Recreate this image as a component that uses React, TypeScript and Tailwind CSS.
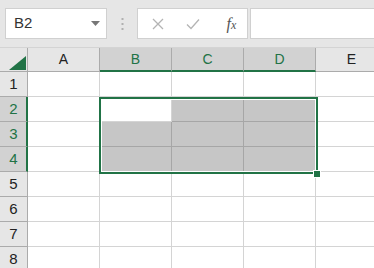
import React from "react";

const cols = ["A", "B", "C", "D", "E"];
const rows = [1, 2, 3, 4, 5, 6, 7, 8];
const selCols = ["B", "C", "D"];
const selRows = [2, 3, 4];

export default function App() {
  return (
    <div
      className="w-[374px] h-[268px] overflow-hidden bg-white relative"
      style={{ fontFamily: '"Liberation Sans", Arial, sans-serif' }}
    >
      {/* Formula bar */}
      <div className="h-[48px] bg-[#e6e6e6] flex items-start pt-[8px] pl-[5px] border-b border-[#d4d4d4]">
        <div className="w-[102px] h-[31px] bg-white border border-[#d0d0d0] flex items-center justify-between pl-[8px] pr-[6px]">
          <span className="text-[15px] text-[#333]">B2</span>
          <svg width="9" height="5" viewBox="0 0 9 5">
            <path d="M0 0 L9 0 L4.5 5 Z" fill="#777" />
          </svg>
        </div>
        <div className="w-[30px] h-[31px] flex items-center justify-center">
          <svg width="3" height="12" viewBox="0 0 3 12">
            <rect x="0.5" y="0" width="2" height="2" fill="#b0b0b0" />
            <rect x="0.5" y="5" width="2" height="2" fill="#b0b0b0" />
            <rect x="0.5" y="10" width="2" height="2" fill="#b0b0b0" />
          </svg>
        </div>
        <div className="w-[111px] h-[31px] bg-white border border-[#d0d0d0] flex items-center">
          <div className="w-[36px] flex justify-center pl-[4px]">
            <svg width="12" height="12" viewBox="0 0 12 12">
              <path d="M1 1 L11 11 M11 1 L1 11" stroke="#b4b4b4" strokeWidth="1.3" />
            </svg>
          </div>
          <div className="w-[36px] flex justify-center pl-[2px]">
            <svg width="14" height="12" viewBox="0 0 14 12">
              <path d="M1 6.5 L5 10.5 L13 1.5" stroke="#b4b4b4" strokeWidth="1.3" fill="none" />
            </svg>
          </div>
          <div className="flex-1 flex justify-center pl-[6px]">
            <span
              className="text-[16px] italic text-[#555] leading-none"
              style={{ fontFamily: '"Liberation Serif", "Times New Roman", serif' }}
            >
              <span>f</span>
              <span className="text-[12px]">x</span>
            </span>
          </div>
        </div>
        <div className="ml-[2px] flex-1 h-[31px] bg-white border border-[#d0d0d0] border-r-0" />
      </div>

      {/* Grid */}
      <div className="grid grid-cols-[28px_72px_72px_72px_72px_72px]">
        {/* Header row */}
        <div className="h-[24px] bg-[#e6e6e6] border-r border-b border-[#ababab] relative">
          <svg className="absolute left-[9px] top-[8px]" width="17" height="14" viewBox="0 0 17 14">
            <path d="M17 0 L17 14 L0 14 Z" fill="#217346" />
          </svg>
        </div>
        {cols.map((c) => {
          const sel = selCols.includes(c);
          return (
            <div
              key={c}
              className={
                sel
                  ? "h-[24px] bg-[#d2d2d2] border-r border-[#ababab] border-b-2 border-b-[#217346] flex items-center justify-center text-[14px] text-[#217346]"
                  : "h-[24px] bg-[#e6e6e6] border-r border-[#ababab] border-b border-b-[#ababab] flex items-center justify-center text-[14px] text-[#222]"
              }
            >
              {c}
            </div>
          );
        })}
        {rows.map((r) => {
          const rsel = selRows.includes(r);
          return (
            <React.Fragment key={r}>
              <div
                className={
                  rsel
                    ? "h-[25px] bg-[#d2d2d2] border-r-2 border-r-[#217346] border-b border-[#ababab] flex items-center justify-center text-[15px] text-[#217346] pl-[1px]"
                    : "h-[25px] bg-[#e6e6e6] border-r border-r-[#ababab] border-b border-[#ababab] flex items-center justify-center text-[15px] text-[#222]"
                }
              >
                {r}
              </div>
              {cols.map((c) => {
                const filled =
                  rsel && selCols.includes(c) && !(r === 2 && c === "B");
                return (
                  <div
                    key={c}
                    className={
                      filled
                        ? "h-[25px] bg-[#c6c6c6] border-r border-b border-[#a6a6a6]"
                        : "h-[25px] bg-white border-r border-b border-[#d4d4d4]"
                    }
                  />
                );
              })}
            </React.Fragment>
          );
        })}
      </div>

      {/* Selection overlay */}
      <div className="absolute left-[99px] top-[97px] w-[219px] h-[77px] border-2 border-[#217346] shadow-[inset_0_0_0_1px_#ffffff] pointer-events-none" />
      <div className="absolute left-[313px] top-[170px] w-[8px] h-[8px] bg-[#217346] border border-white" />
    </div>
  );
}
